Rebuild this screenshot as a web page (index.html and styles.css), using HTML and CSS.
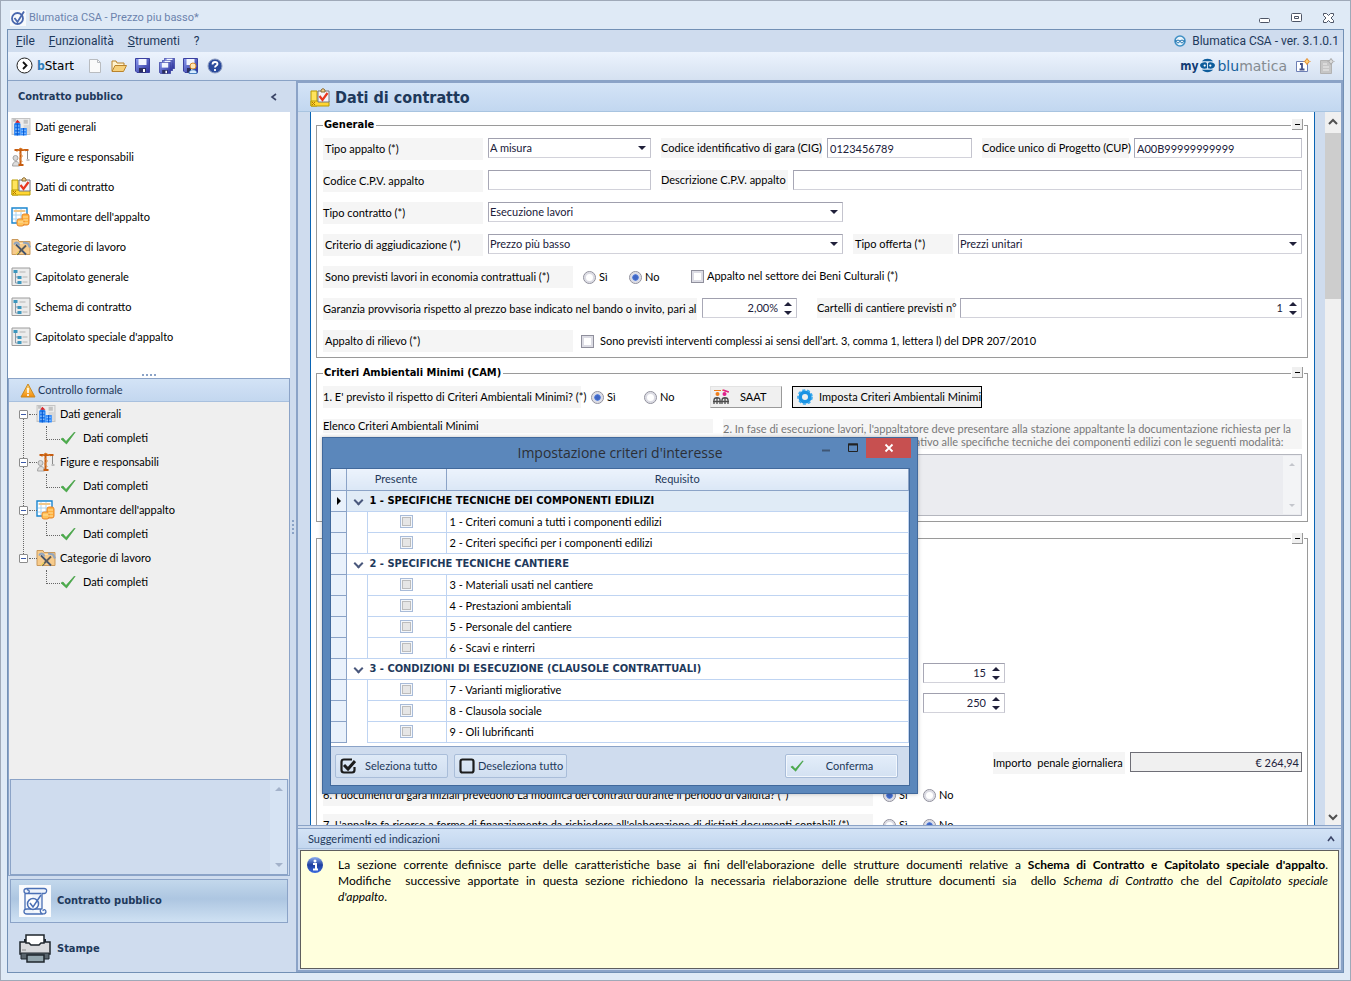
FILE: index.html
```html
<!DOCTYPE html>
<html lang="it">
<head>
    <meta charset="UTF-8">
    <meta name="viewport" content="width=device-width, initial-scale=1.0">
    <title>Blumatica CSA</title>
    <link rel="stylesheet" href="styles.css">
</head>
<body>
    <!-- Icons used more than once -->
    <svg class="defs" aria-hidden="true">
        <defs>
            <linearGradient id="gWarn" x1="0" y1="0" x2="0" y2="1"><stop offset="0" stop-color="#fddc7c"/><stop offset="1" stop-color="#f28c0a"/></linearGradient>
            <linearGradient id="gBlue" x1="0" y1="0" x2="0" y2="1"><stop offset="0" stop-color="#8fb0f0"/><stop offset="0.5" stop-color="#1f3f9f"/><stop offset="1" stop-color="#3a6ae0"/></linearGradient>
            <linearGradient id="gDisk" x1="0" y1="0" x2="1" y2="1"><stop offset="0" stop-color="#8c9cf0"/><stop offset="1" stop-color="#2a2f9a"/></linearGradient>
        </defs>
        <symbol id="i-building" viewBox="0 0 19 18">
            <path d="M1 1h17v15H1z" fill="#ececec" stroke="#c4c4c4"/><path d="M2 1h3v3H2zM12 2h4v4h-4z" fill="#c2c2c2"/><path d="M12 7h5v8h-5z" fill="#d8d8d8"/>
            <path d="M3 17V6l3-2 3 2v11z" fill="#1f7cf0"/><path d="M4 5l2-3 3 3z" fill="#dd2222"/><path d="M9 17v-7h6v7z" fill="#2f8cff"/>
            <path d="M4 8h4M4 11h4M4 14h4M10 12h4M10 15h4" stroke="#a9d2ff"/><path d="M6 6v11M12 10v7" stroke="#0b55c8"/>
        </symbol>
        <symbol id="i-crane" viewBox="0 0 19 20">
            <circle cx="4" cy="11" r="2.500" fill="#d8d8d8" stroke="#a4a4a4"/><path d="M1 19c0-6 7-6 7 0z" fill="#ddd" stroke="#a4a4a4"/>
            <path d="M3 3h14M9 1v17M7 18h5" stroke="#c65c10" stroke-width="2" fill="none"/><path d="M5 5l4-4 5 3M8 6l3 3-3 3 3 3" stroke="#e08a3c" fill="none"/><path d="M16 4v8M15 13h3" stroke="#8a8a8a" fill="none"/>
        </symbol>
        <symbol id="i-contract" viewBox="0 0 20 20">
            <path d="M1 3h6v15H1z" fill="#ffe45c" stroke="#b89a00"/><path d="M1 13h18v5H1z" fill="#ffd633" stroke="#b89a00"/><path d="M2 14l3 3M5 14l-3 3" stroke="#b07800"/>
            <path d="M8 3h11v11H8z" fill="#f4f4f8" stroke="#76767e"/><path d="M11 4V2l2-1.500 2 1.500v2z" fill="#eecb8a" stroke="#8c6d32"/><path d="M9.500 8l3 4 5-7" fill="none" stroke="#e8371f" stroke-width="2.200"/>
        </symbol>
        <symbol id="i-coins" viewBox="0 0 20 20">
            <path d="M1 1h15v15H1z" fill="#fff" stroke="#1a86d0" stroke-width="1.400"/><path d="M2 4h13M2 8h13M2 12h10" stroke="#a9d3f0"/><path d="M5 2v13M10 2v13" stroke="#a9d3f0"/><path d="M3 3h11v2H3z" fill="#f0c789"/>
            <rect x="11" y="7" width="7" height="11" rx="2" fill="#ffb13d" stroke="#e8862a"/><rect x="6" y="12" width="7" height="7" rx="2" fill="#ffc35a" stroke="#e8862a"/><path d="M12 10h5M12 13h5M12 16h5M7 15h5" stroke="#ffe0a0"/>
        </symbol>
        <symbol id="i-tools" viewBox="0 0 20 19">
            <path d="M1 2h6l1 2h11v13H1z" fill="#f7cb8b" stroke="#c9995c"/><path d="M2 6h16" stroke="#ffe2b5"/>
            <path d="M5 7l10 10" stroke="#44546c" stroke-width="1.800"/><path d="M15 8L6 17" stroke="#5b5b5b" stroke-width="1.800"/><path d="M8 14l-3 3" stroke="#eed25c" stroke-width="1.500"/>
            <path d="M3 7c2-3 5-2 5 1M12 5l5 1 2 4" fill="none" stroke="#93a6be" stroke-width="2.200"/>
        </symbol>
        <symbol id="i-outline" viewBox="0 0 19 20">
            <path d="M.5 1h18v17.500H.5z" fill="#ececec" stroke="#9c9c9c"/><path d="M4 5v11h3M4 10h3" fill="none" stroke="#8a9aa8"/>
            <path d="M2 3h4v3H2zM6 9h4v3H6zM6 14h4v3H6z" fill="#3c96bd"/><path d="M8 5h6M11 10h5M11 15h5" stroke="#b4b4b4"/>
        </symbol>
        <symbol id="i-check" viewBox="0 0 16 14"><path d="M1 8l2-1 3 3.500L14.500 1 15 1.500 6.500 13z" fill="#4bb04b" stroke="#3a963a" stroke-width=".6"/></symbol>
        <symbol id="i-face" viewBox="0 0 16 16">
            <path d="M2 3.500C5 0 11 0 14 3.500zM2 12.500c3 3.500 9 3.500 12 0z" fill="#0d5c9b"/><path d="M0 7.500C1 4 7 4 7.500 6v5C4 12 0 11 0 7.500zM16 7.500C15 4 9 4 8.500 6v5c3.500 1 7.500 0 7.500-3.500z" fill="#0d5c9b"/><circle cx="5" cy="8" r="1.200" fill="#fff"/><circle cx="11" cy="8" r="1.200" fill="#fff"/>
        </symbol>
        <symbol id="i-face-ring" viewBox="0 0 12 12">
            <circle cx="6" cy="6" r="5" fill="#e8f3fb" stroke="#3f8fc4" stroke-width="1.600"/><path d="M1 6h10" stroke="#2a79b2" stroke-width="1.500"/><circle cx="4" cy="6.500" r="1.400" fill="#fff" stroke="#2a79b2"/><circle cx="8" cy="6.500" r="1.400" fill="#fff" stroke="#2a79b2"/>
        </symbol>
        <symbol id="i-disk" viewBox="0 0 15 15">
            <path d="M.5.500h14v14H2l-1.500-1.500z" fill="url(#gDisk)" stroke="#3a40a0"/><path d="M3.500 1h8v6h-8z" fill="#f2f5ff"/><path d="M4 10h7v4.500H4z" fill="#2b2e60"/><path d="M8 11h2v3H8z" fill="#fff"/>
        </symbol>
    </svg>

    <div class="window">
        <header class="titlebar">
            <svg class="app-icon" viewBox="0 0 16 16"><path d="M0 0h16v16H0z" fill="#f8fafc"/><circle cx="7.500" cy="8.500" r="5.500" fill="none" stroke="#4a68ae" stroke-width="1.800"/><path d="M4.500 8l3 4L14 1.500" fill="none" stroke="#4a68ae" stroke-width="1.800"/></svg>
            <span>Blumatica CSA - Prezzo piu basso*</span>
            <div class="win-buttons">
                <button type="button" aria-label="Riduci"><svg width="14" height="12"><rect x="2.500" y="6.500" width="10" height="4" rx="1" fill="#fff" stroke="#4d5566"/></svg></button>
                <button type="button" aria-label="Ripristina"><svg width="14" height="12"><rect x="2.500" y="1.500" width="10" height="8" rx="1" fill="#fff" stroke="#4d5566"/><path d="M5.500 4.500h4v2h-4z" fill="none" stroke="#4d5566"/></svg></button>
                <button type="button" aria-label="Chiudi"><svg width="14" height="12"><path d="M2.500 1.500h3l2 2 2-2h3v2L10 6l2.500 2.500v2h-3l-2-2-2 2h-3v-2L5 6 2.500 3.500z" fill="#fff" stroke="#4d5566"/></svg></button>
            </div>
        </header>

        <div class="frame">
            <nav class="menubar">
                <a href="#"><u>F</u>ile</a>
                <a href="#"><u>F</u>unzionalità</a>
                <a href="#"><u>S</u>trumenti</a>
                <a href="#">?</a>
                <span class="version"><svg width="12" height="12"><use href="#i-face-ring"/></svg>Blumatica CSA - ver. 3.1.0.1</span>
            </nav>

            <div class="toolbar">
                <button type="button" class="bstart"><svg width="17" height="17"><circle cx="8.500" cy="8.500" r="7.500" fill="#fff" stroke="#222"/><path d="M7 5l3.500 3.500L7 12" fill="none" stroke="#111" stroke-width="1.800"/></svg><span><b>b</b>Start</span></button>
                <button type="button" aria-label="Nuovo"><svg width="16" height="16"><path d="M2.500 1.500h8l3 3v10h-11z" fill="#fafafa" stroke="#b9bcc0"/><path d="M10.500 1.500v3h3" fill="none" stroke="#b9bcc0"/></svg></button>
                <button type="button" aria-label="Apri"><svg width="16" height="16"><path d="M1 13V3h4l1 2h7v3" fill="#fff3cf" stroke="#b9832c"/><path d="M1 13.500l3-6h11.500l-3 6z" fill="#f6d07a" stroke="#b9832c"/></svg></button>
                <button type="button" aria-label="Salva"><svg width="16" height="16"><use href="#i-disk" width="15" height="15"/></svg></button>
                <button type="button" aria-label="Salva tutto"><svg width="16" height="16"><use href="#i-disk" x="5" y="0" width="11" height="11"/><use href="#i-disk" x="3" y="2" width="11" height="11"/><use href="#i-disk" x="0" y="4" width="12" height="12"/></svg></button>
                <button type="button" aria-label="Salva con nome"><svg width="16" height="16"><use href="#i-disk" width="15" height="15"/><circle cx="10" cy="8" r="3" fill="#ffe6b5" stroke="#d98a2a"/><path d="M6 15.500c0-5 8-5 8 0z" fill="#d8ecff" stroke="#4a80c0"/></svg></button>
                <button type="button" aria-label="Guida"><svg width="16" height="16"><circle cx="8" cy="8" r="7" fill="#2a4a9c" stroke="#8d9cc0"/><path d="M5.500 6.500c0-3.500 5-3 5-.5 0 1.500-2.500 1.500-2.500 3.500M8 11v2" fill="none" stroke="#fff" stroke-width="1.800"/></svg></button>
                <div class="brand">
                    <b>my</b><svg width="15" height="17"><use href="#i-face"/></svg><span><i>blu</i>matica</span>
                    <svg width="16" height="16"><path d="M1.500 3.500h11v10h-11z" fill="#fff" stroke="#6d7fb5"/><path d="M5 6h2v5M4.500 11.500h5" fill="none" stroke="#44538a" stroke-width="1.800"/><circle cx="12" cy="3.500" r="2" fill="#ffd27a" stroke="#e8902e"/><path d="M12 0v1M12 6v1M8.500 3.500h1M14.500 3.500h1" stroke="#e8902e"/></svg>
                    <svg width="16" height="16"><path d="M1.500 2.500h11v13h-11z" fill="#c6c6c6" stroke="#b2b2b2"/><path d="M4 6h4M4 9h6M4 12h6" stroke="#eee"/><circle cx="12" cy="3.500" r="2" fill="#ddd" stroke="#aaa"/><path d="M12 0v1M12 6v1M8.500 3.500h1M14.500 3.500h1" stroke="#aaa"/></svg>
                </div>
            </div>

            <div class="body">
                <aside class="sidebar">
                    <div class="side-col">
                        <div class="side-head"><b>Contratto pubblico</b><svg width="8" height="8"><path d="M6 1L2 4l4 3" fill="none" stroke="#3a4466" stroke-width="1.600"/></svg></div>
                        <ul class="side-list">
                            <li><a href="#"><svg><use href="#i-building"/></svg>Dati generali</a></li>
                            <li><a href="#"><svg><use href="#i-crane"/></svg>Figure e responsabili</a></li>
                            <li><a href="#"><svg><use href="#i-contract"/></svg>Dati di contratto</a></li>
                            <li><a href="#"><svg><use href="#i-coins"/></svg>Ammontare dell'appalto</a></li>
                            <li><a href="#"><svg><use href="#i-tools"/></svg>Categorie di lavoro</a></li>
                            <li><a href="#"><svg><use href="#i-outline"/></svg>Capitolato generale</a></li>
                            <li><a href="#"><svg><use href="#i-outline"/></svg>Schema di contratto</a></li>
                            <li><a href="#"><svg><use href="#i-outline"/></svg>Capitolato speciale d'appalto</a></li>
                        </ul>
                        <div class="grip"><i></i><i></i><i></i><i></i></div>

                        <section class="check-panel">
                            <div class="check-head"><svg width="16" height="15"><path d="M8 1l7 13H1z" fill="url(#gWarn)" stroke="#c98720" stroke-linejoin="round"/><path d="M8 5v5M8 11v2" stroke="#fff" stroke-width="1.600"/></svg>Controllo formale</div>
                            <ul class="tree">
                                <li><div class="node"><button type="button" aria-label="Comprimi"></button><svg><use href="#i-building"/></svg>Dati generali</div>
                                    <div class="leaf"><svg><use href="#i-check"/></svg>Dati completi</div></li>
                                <li><div class="node"><button type="button" aria-label="Comprimi"></button><svg><use href="#i-crane"/></svg>Figure e responsabili</div>
                                    <div class="leaf"><svg><use href="#i-check"/></svg>Dati completi</div></li>
                                <li><div class="node"><button type="button" aria-label="Comprimi"></button><svg><use href="#i-coins"/></svg>Ammontare dell'appalto</div>
                                    <div class="leaf"><svg><use href="#i-check"/></svg>Dati completi</div></li>
                                <li><div class="node"><button type="button" aria-label="Comprimi"></button><svg><use href="#i-tools"/></svg>Categorie di lavoro</div>
                                    <div class="leaf"><svg><use href="#i-check"/></svg>Dati completi</div></li>
                            </ul>
                            <div class="message-box"><div class="mini-scroll"><i class="up"></i><i class="down"></i></div></div>
                        </section>

                        <button type="button" class="nav-item active"><svg width="32" height="32"><path d="M0 0h32v32H0z" fill="#fafbfd"/><path d="M8 3.500h17c4 0 3 5 0 5h-2v16M8 3.500c-4 0-4 5 0 5 3 0 3-4 0-3.500M9 8.500h13M6 8v16M8 24h14c-3 4 4 7 5 3 0-3-3-3-3-1M8 24c-4 0-4 5 0 5h16" fill="#eef3fb" stroke="#4a6fb5" stroke-width="1.300"/><circle cx="14" cy="19" r="5.500" fill="#fff" stroke="#4a6fb5" stroke-width="1.500"/><path d="M11 18l3 4 8-12" fill="none" stroke="#4a6fb5" stroke-width="1.500"/></svg>Contratto pubblico</button>
                        <button type="button" class="nav-item"><svg width="32" height="32"><path d="M5 6h22v5H5z" fill="#1f262c"/><path d="M1 9h30v12H1z" fill="#d9dadd" stroke="#1f262c" stroke-width="1.500"/><path d="M2 20h28v6H2z" fill="#59646c" stroke="#1f262c"/><path d="M7 2h18v8l-3 0-2 2h-8l-2-2H7z" fill="#fff" stroke="#1f262c" stroke-width="1.500"/><path d="M8 22h17v7H8z" fill="#93a5ad" stroke="#1f262c" stroke-width="1.500"/><path d="M3 17h4" stroke="#8c8c8c"/></svg>Stampe</button>
                    </div>
                    <div class="grip vertical"><i></i><i></i><i></i><i></i></div>
                </aside>

                <main class="main">
                    <div class="main-head"><svg width="20" height="20"><use href="#i-contract"/></svg><h1>Dati di contratto</h1></div>

                    <div class="scroll-area">
                        <form class="form">
                            <fieldset>
                                <legend>Generale</legend>
                                <button type="button" class="collapse" aria-label="Comprimi Generale"></button>
                                <div class="row">
                                    <label class="lbl first indent w160" for="tipoAppalto">Tipo appalto (*)</label>
                                    <span class="select w163"><select id="tipoAppalto"><option>A misura</option></select></span>
                                    <label class="lbl w161" for="cig">Codice identificativo di gara (CIG)</label>
                                    <input type="text" class="w145" id="cig" value="0123456789">
                                    <label class="lbl w147" for="cup">Codice unico di Progetto (CUP)</label>
                                    <input type="text" class="grow" id="cup" value="A00B99999999999">
                                </div>
                                <div class="row">
                                    <label class="lbl first w160" for="cpv">Codice C.P.V. appalto</label>
                                    <input type="text" class="w163" id="cpv">
                                    <label class="lbl w127" for="cpvDescr">Descrizione C.P.V. appalto</label>
                                    <input type="text" class="grow" id="cpvDescr">
                                </div>
                                <div class="row">
                                    <label class="lbl first w160" for="tipoContratto">Tipo contratto (*)</label>
                                    <span class="select w355"><select id="tipoContratto"><option>Esecuzione lavori</option></select></span>
                                </div>
                                <div class="row">
                                    <label class="lbl first indent w160" for="criterio">Criterio di aggiudicazione (*)</label>
                                    <span class="select w355"><select id="criterio"><option>Prezzo più basso</option></select></span>
                                    <label class="lbl indent w100" for="offerta">Tipo offerta (*)</label>
                                    <span class="select grow"><select id="offerta"><option>Prezzi unitari</option></select></span>
                                </div>
                                <div class="row">
                                    <span class="lbl first indent w250">Sono previsti lavori in economia contrattuali (*)</span>
                                    <div class="radios">
                                        <label><input type="radio" name="economia">Sì</label>
                                        <label><input type="radio" name="economia" checked>No</label>
                                    </div>
                                    <label class="check"><input type="checkbox">Appalto nel settore dei Beni Culturali (*)</label>
                                </div>
                                <div class="row">
                                    <label class="lbl first w374" for="garanzia">Garanzia provvisoria rispetto al prezzo base indicato nel bando o invito, pari al</label>
                                    <span class="spin w95"><input type="text" id="garanzia" value="2,00%"><i class="up"></i><i class="down"></i></span>
                                    <label class="lbl cartelli" for="cartelli">Cartelli di cantiere previsti n°</label>
                                    <span class="spin grow"><input type="text" id="cartelli" value="1"><i class="up"></i><i class="down"></i></span>
                                </div>
                                <div class="row">
                                    <span class="lbl first indent w250">Appalto di rilievo (*)</span>
                                    <label class="check wide"><input type="checkbox">Sono previsti interventi complessi ai sensi dell’art. 3, comma 1, lettera l) del DPR 207/2010</label>
                                </div>
                            </fieldset>

                            <fieldset>
                                <legend>Criteri Ambientali Minimi (CAM)</legend>
                                <button type="button" class="collapse" aria-label="Comprimi CAM"></button>
                                <div class="row">
                                    <span class="lbl first w258">1. E' previsto il rispetto di Criteri Ambientali Minimi? (*)</span>
                                    <div class="radios loose">
                                        <label><input type="radio" name="cam" checked>Sì</label>
                                        <label><input type="radio" name="cam">No</label>
                                    </div>
                                    <button type="button" class="tool-btn saat"><svg width="16" height="16"><path d="M1 1.500h7M9 1l6 2" stroke="#ef7d1a"/><path d="M10 1l6 2" stroke="#e0218a" stroke-width="1.500"/><circle cx="4.500" cy="5" r="2" fill="#ef7d1a"/><circle cx="11.500" cy="5" r="2" fill="#e0218a"/><path d="M1 15v-4c0-3 6-3 6 0v4M9 15v-4c0-3 6-3 6 0v4M0 12.500h16M4 9v6M12 9v6" fill="none" stroke="#4c4c4c" stroke-width="1.300"/></svg>SAAT</button>
                                    <button type="button" class="tool-btn imposta"><svg width="16" height="16"><circle cx="8" cy="8" r="4.800" fill="none" stroke="#1c93e3" stroke-width="3.600"/><circle cx="8" cy="8" r="7" fill="none" stroke="#38a9ef" stroke-width="1.600" stroke-dasharray="3 2"/></svg>Imposta Criteri Ambientali Minimi</button>
                                </div>
                                <div class="cam-cols">
                                    <div class="cam-list"><span class="lbl first">Elenco Criteri Ambientali Minimi</span></div>
                                    <div class="cam-docs">
                                        <label class="note" for="modalita">2. In fase di esecuzione lavori, l'appaltatore deve presentare alla stazione appaltante la documentazione richiesta per la<br>verifica di conformità, con il progetto relativo alle specifiche tecniche dei componenti edilizi con le seguenti modalità:</label>
                                        <div class="area"><textarea id="modalita" disabled></textarea><div class="mini-scroll"><i class="up"></i><i class="down"></i></div></div>
                                    </div>
                                </div>
                            </fieldset>

                            <fieldset class="penali">
                                <button type="button" class="collapse" aria-label="Comprimi"></button>
                                <div class="row tight right-part"><span class="spin w82"><input type="text" aria-label="Giorni" value="15"><i class="up"></i><i class="down"></i></span></div>
                                <div class="row right-part"><span class="spin w82"><input type="text" aria-label="Limite" value="250"><i class="up"></i><i class="down"></i></span></div>
                                <div class="row amount">
                                    <label class="lbl first w130" for="penale">Importo &nbsp;penale giornaliera</label>
                                    <input type="text" class="readonly" id="penale" value="€ 264,94" readonly>
                                </div>
                                <div class="row tight">
                                    <span class="lbl first w550">6. I documenti di gara iniziali prevedono La modifica dei contratti durante il periodo di validità? (*)</span>
                                    <div class="radios close">
                                        <label><input type="radio" name="modifica" checked>Sì</label>
                                        <label><input type="radio" name="modifica">No</label>
                                    </div>
                                </div>
                                <div class="row tight">
                                    <span class="lbl first w550">7. L'appalto fa ricorso a forme di finanziamento da richiedere all'elaborazione di distinti documenti contabili (*)</span>
                                    <div class="radios close">
                                        <label><input type="radio" name="finanziamento">Sì</label>
                                        <label><input type="radio" name="finanziamento" checked>No</label>
                                    </div>
                                </div>
                            </fieldset>
                        </form>
                        <div class="scrollbar">
                            <svg width="16" height="21"><path d="M4 12l4-4 4 4" fill="none" stroke="#505050" stroke-width="2"/></svg>
                            <div class="thumb"></div>
                            <svg width="16" height="16"><path d="M4 6l4 4 4-4" fill="none" stroke="#505050" stroke-width="2"/></svg>
                        </div>
                    </div>

                    <section class="hints">
                        <div class="hints-head">Suggerimenti ed indicazioni<svg width="8" height="8"><path d="M1 6l3-4 3 4" fill="none" stroke="#3a4466" stroke-width="1.600"/></svg></div>
                        <div class="hints-body">
                            <svg width="18" height="18"><circle cx="9" cy="9" r="8" fill="url(#gBlue)"/><circle cx="9" cy="5" r="1.500" fill="#fff"/><path d="M7 8h3v5M7 13.500h5" fill="none" stroke="#fff" stroke-width="2"/></svg>
                            <div class="hints-text">
                                <p>La sezione corrente definisce parte delle caratteristiche base ai fini dell'elaborazione delle strutture documenti relative a <b>Schema di Contratto e Capitolato speciale d'appalto</b>.</p>
                                <p>Modifiche &nbsp;successive apportate in questa sezione richiedono la necessaria rielaborazione delle strutture documenti sia &nbsp;dello <em>Schema di Contratto</em> che del <em>Capitolato speciale</em></p>
                                <p class="last"><em>d'appalto</em>.</p>
                            </div>
                        </div>
                    </section>
                </main>
            </div>
        </div>

        <!-- Criteria dialog -->
        <div class="dialog" role="dialog" aria-labelledby="dialogTitle">
            <div class="dialog-head">
                <h2 id="dialogTitle">Impostazione criteri d'interesse</h2>
                <div class="dialog-buttons">
                    <button type="button" aria-label="Riduci"><svg width="10" height="10"><path d="M1 7.500h8" stroke="#3f5675" stroke-width="2"/></svg></button>
                    <button type="button" aria-label="Ingrandisci"><svg width="10" height="10"><path d="M.5 1h9v7.500h-9z" fill="none" stroke="#222"/><path d="M0 1.500h10" stroke="#222" stroke-width="2"/></svg></button>
                    <button type="button" class="close" aria-label="Chiudi"><svg width="10" height="10"><path d="M1.500 1.500l7 7M8.500 1.500l-7 7" stroke="#fff" stroke-width="1.800"/></svg></button>
                </div>
            </div>
            <div class="dialog-body">
                <table class="grid">
                    <colgroup><col class="c-mark"><col class="c-tree"><col class="c-check"><col></colgroup>
                    <thead><tr><th></th><th colspan="2">Presente</th><th>Requisito</th></tr></thead>
                    <tbody>
                        <tr class="group current"><td class="mark"></td><td colspan="3">1 - SPECIFICHE TECNICHE DEI COMPONENTI EDILIZI</td></tr>
                        <tr><td class="mark"></td><td></td><td><input type="checkbox" id="r1"></td><td><label for="r1">1 - Criteri comuni a tutti i componenti edilizi</label></td></tr>
                        <tr><td class="mark"></td><td></td><td><input type="checkbox" id="r2"></td><td><label for="r2">2 - Criteri specifici per i componenti edilizi</label></td></tr>
                        <tr class="group"><td class="mark"></td><td colspan="3">2 - SPECIFICHE TECNICHE CANTIERE</td></tr>
                        <tr><td class="mark"></td><td></td><td><input type="checkbox" id="r3"></td><td><label for="r3">3 - Materiali usati nel cantiere</label></td></tr>
                        <tr><td class="mark"></td><td></td><td><input type="checkbox" id="r4"></td><td><label for="r4">4 - Prestazioni ambientali</label></td></tr>
                        <tr><td class="mark"></td><td></td><td><input type="checkbox" id="r5"></td><td><label for="r5">5 - Personale del cantiere</label></td></tr>
                        <tr><td class="mark"></td><td></td><td><input type="checkbox" id="r6"></td><td><label for="r6">6 - Scavi e rinterri</label></td></tr>
                        <tr class="group"><td class="mark"></td><td colspan="3">3 - CONDIZIONI DI ESECUZIONE (CLAUSOLE CONTRATTUALI)</td></tr>
                        <tr><td class="mark"></td><td></td><td><input type="checkbox" id="r7"></td><td><label for="r7">7 - Varianti migliorative</label></td></tr>
                        <tr><td class="mark"></td><td></td><td><input type="checkbox" id="r8"></td><td><label for="r8">8 - Clausola sociale</label></td></tr>
                        <tr><td class="mark"></td><td></td><td><input type="checkbox" id="r9"></td><td><label for="r9">9 - Oli lubrificanti</label></td></tr>
                    </tbody>
                </table>
                <div class="dialog-foot">
                    <button type="button"><svg width="16" height="16"><path d="M12 1.500H4Q1.500 1.500 1.500 4v8q0 2.500 2.500 2.500h8q2.500 0 2.500-2.500V9" fill="none" stroke="#1c1c1c" stroke-width="2.200"/><path d="M4 7l4 4 7-8" fill="none" stroke="#1c1c1c" stroke-width="3"/></svg><span>Seleziona tutto</span></button>
                    <button type="button" class="snug"><svg width="16" height="16"><rect x="1.500" y="1.500" width="13" height="13" rx="2" fill="none" stroke="#1c1c1c" stroke-width="2.200"/></svg><span>Deseleziona tutto</span></button>
                    <button type="button" class="confirm"><svg width="14" height="14"><use href="#i-check"/></svg><span>Conferma</span></button>
                </div>
            </div>
        </div>
    </div>
</body>
</html>
```
FILE: styles.css
```css
* {
    box-sizing: border-box;
}

body {
    margin: 0;
    font-family: Lato, "Liberation Sans", sans-serif;
    font-size: 11px;
    line-height: 14px;
    color: #000;
}

button, input, select, textarea {
    font: inherit;
    color: inherit;
    margin: 0;
}

button {
    padding: 0;
    border: none;
    background: none;
}

svg {
    flex: none;
    display: block;
}

a {
    color: inherit;
    text-decoration: none;
}

ul {
    margin: 0;
    padding: 0;
    list-style: none;
}

b, h1, legend {
    font-family: "DejaVu Sans Condensed", "DejaVu Sans", sans-serif;
    font-weight: bold;
}

.defs {
    position: absolute;
    width: 0;
    height: 0;
}

/* Window frame */
.window {
    position: relative;
    display: flex;
    flex-direction: column;
    height: 100vh;
    padding: 0 6px 7px;
    border: 1px solid #9fa9b8;
    background: #dfeaf6;
}

.titlebar {
    display: flex;
    align-items: center;
    gap: 3px;
    height: 28px;
    padding: 5px 0 0 3px;
    color: #6c83ad;
    font-family: Roboto, sans-serif;
}

.app-icon {
    width: 16px;
    height: 16px;
}

.win-buttons {
    display: flex;
    margin-left: auto;
}

.win-buttons button {
    width: 32px;
    display: flex;
    justify-content: center;
}

.frame {
    flex: 1;
    min-height: 0;
    display: flex;
    flex-direction: column;
    border: 1px solid #7290b5;
    background: #cfdcee;
}

.menubar {
    display: flex;
    align-items: center;
    gap: 14px;
    height: 22px;
    padding: 0 4px 0 8px;
    font-family: Roboto, sans-serif;
    font-size: 12px;
    color: #1e395b;
}

.version {
    display: flex;
    align-items: center;
    gap: 6px;
    margin-left: auto;
}

.toolbar {
    display: flex;
    align-items: center;
    gap: 8px;
    height: 29px;
    padding: 0 8px 1px 8px;
    background: linear-gradient(#ecf3fd, #d5e1f1);
    border-bottom: 1px solid #8aa3c6;
}

.bstart {
    display: flex;
    align-items: center;
    gap: 4px;
    margin-right: 5px;
    font: 12px/14px "DejaVu Sans", sans-serif;
}

.bstart b {
    color: #2f7db8;
}

.brand {
    display: flex;
    align-items: center;
    gap: 2px;
    margin-left: auto;
}

.brand b {
    color: #123c74;
    font-size: 12px;
}

.brand span {
    font: 14px/16px "DejaVu Sans", sans-serif;
    color: #858b91;
}

.brand i {
    font-style: normal;
    color: #17619c;
}

.brand svg:nth-of-type(n+2) {
    margin-left: 6px;
}

.body {
    flex: 1;
    min-height: 0;
    display: flex;
}

/* Sidebar */
.sidebar {
    flex: none;
    width: 288px;
    display: flex;
    background: #cfdcee;
}

.side-col {
    width: 282px;
    display: flex;
    flex-direction: column;
}

.side-head {
    display: flex;
    justify-content: space-between;
    align-items: center;
    height: 31px;
    padding: 1px 12px 0 10px;
    color: #1e395b;
}

.side-list {
    height: 262px;
    background: #fff;
}

.side-list a {
    display: flex;
    align-items: center;
    gap: 4px;
    height: 30px;
    padding-left: 3px;
}

.side-list svg, .node svg {
    width: 20px;
    height: 20px;
}

.grip {
    display: flex;
    justify-content: center;
    gap: 2px;
    height: 4px;
    background: #fff;
}

.grip i {
    width: 2px;
    height: 2px;
    background: #8ba3c7;
}

.grip.vertical {
    flex-direction: column;
    align-items: center;
    flex: 1;
    height: auto;
    background: none;
}

.check-panel {
    flex: 1;
    min-height: 0;
    display: flex;
    flex-direction: column;
    border: 1px solid #8ba3c7;
}

.check-head {
    display: flex;
    align-items: center;
    gap: 2px;
    height: 23px;
    padding-left: 11px;
    background: linear-gradient(#d3e3f6, #c3d7ef);
    border-bottom: 1px solid #a8c0de;
    color: #1e395b;
}

.tree {
    flex: 1;
    padding-left: 10px;
    background: #efefef;
}

.tree li {
    position: relative;
}

.node, .leaf {
    position: relative;
    display: flex;
    align-items: center;
    height: 24px;
}

.node svg {
    margin: 0 4px 0 8px;
}

.node button {
    position: relative;
    width: 9px;
    height: 9px;
    border: 1px solid #8c8c8c;
    border-radius: 1px;
    background: #fff;
    z-index: 1;
}

.node button::after {
    content: "";
    position: absolute;
    left: 1px;
    right: 1px;
    top: 3px;
    border-top: 1px solid #3c5aa8;
}

.leaf {
    gap: 7px;
    padding-left: 41px;
}

.leaf svg {
    width: 16px;
    height: 14px;
}

/* Dotted tree lines */
.node::before {
    content: "";
    position: absolute;
    left: 10px;
    top: 12px;
    width: 8px;
    border-top: 1px dotted #666;
}

.tree li:not(:last-child)::before {
    content: "";
    position: absolute;
    left: 4px;
    top: 12px;
    height: 48px;
    border-left: 1px dotted #666;
}

.leaf::before {
    content: "";
    position: absolute;
    left: 27px;
    top: 0;
    width: 13px;
    height: 13px;
    border-left: 1px dotted #666;
    border-bottom: 1px dotted #666;
}

.message-box {
    display: flex;
    justify-content: flex-end;
    height: 96px;
    margin: 0 1px;
    border: 1px solid #8ba3c7;
    background: #cfdcee;
}

.mini-scroll {
    display: flex;
    flex-direction: column;
    justify-content: space-between;
    align-items: center;
    width: 17px;
    padding: 7px 0;
    background: #d6e3f3;
}

.up, .down {
    border: 4px solid transparent;
}

.up {
    border-top: none;
    border-bottom-color: #a3b2ca;
}

.down {
    border-bottom: none;
    border-top-color: #a3b2ca;
}

.nav-item {
    display: flex;
    align-items: center;
    gap: 6px;
    height: 47px;
    padding-left: 11px;
    font: bold 11px/14px "DejaVu Sans Condensed", "DejaVu Sans", sans-serif;
    color: #1e395b;
}

.nav-item.active {
    height: 44px;
    margin: 3px 2px 2px;
    padding-left: 8px;
    border: 1px solid #8ba3c7;
    background: linear-gradient(#c3d8ec, #adc6e1 45%, #cfe1f3);
}

/* Main area */
.main {
    flex: 1;
    min-width: 0;
    display: flex;
    flex-direction: column;
    border: 2px solid #8ba3c7;
}

.main-head {
    display: flex;
    align-items: center;
    gap: 5px;
    height: 29px;
    flex: none;
    padding: 2px 0 0 12px;
    background: linear-gradient(#d4e4f7, #c2d7f0);
    border-bottom: 1px solid #a8c4e0;
}

.main-head h1 {
    margin: 0;
    font-size: 16px;
    line-height: 20px;
    color: #1e395b;
}

.scroll-area {
    flex: 1;
    min-height: 0;
    display: flex;
    padding-left: 12px;
    overflow: hidden;
    background: #cfdcee;
}

.form {
    flex: 1;
    min-width: 0;
    padding: 5px 6px 0 5px;
    border: solid #0a64b4;
    border-width: 0 1px;
    background: #fff;
}

.scrollbar {
    display: flex;
    flex-direction: column;
    width: 16px;
    margin-left: 10px;
    background: #f0f0f0;
}

.thumb {
    height: 166px;
    margin-bottom: auto;
    background: #cdcdcd;
}

fieldset {
    position: relative;
    min-width: 0;
    margin: 0 0 7px;
    padding: 5px 5px 7px 6px;
    border: 1px solid #9a9a9a;
}

legend {
    padding: 0 2px 0 1px;
    line-height: 16px;
}

.collapse {
    position: absolute;
    right: 4px;
    top: -6px;
    width: 11px;
    height: 11px;
    border: 1px solid #9a9a9a;
    border-width: 0 1px 1px 0;
    background: #f0f0f0;
    box-shadow: 0 0 0 1px #fff;
}

.collapse::after {
    content: "";
    position: absolute;
    left: 3px;
    right: 2px;
    top: 5px;
    border-top: 1px solid #000;
}

legend + .collapse {
    top: -14px;
}

.row {
    display: flex;
    height: 20px;
    margin-bottom: 12px;
}

.row:last-child {
    margin-bottom: 0;
}

.row.tight {
    margin-bottom: 10px;
}

.lbl {
    flex: none;
    height: 20px;
    margin: 0 5px 0 10px;
    line-height: 20px;
    white-space: nowrap;
    background: #f5f5f5;
}

.lbl.first {
    height: 22px;
    margin-left: 0;
    line-height: 22px;
}

.lbl.indent {
    padding-left: 2px;
}

.row > input, .spin, .select {
    height: 20px;
    border: 1px solid;
    border-color: #a0a0ae #c4c4ce #d2d2da #a8a8b6;
    background: #fff;
    color: #20203a;
}

.row > input {
    padding: 0 2px;
}

.select, .spin {
    position: relative;
    display: flex;
}

.select select, .spin input {
    width: 100%;
    min-width: 0;
    padding: 0 2px;
    border: none;
    background: none;
    appearance: none;
}

.select select {
    padding: 0 1px;
}

.select::after {
    content: "";
    position: absolute;
    right: 4px;
    top: 7px;
    border: 4px solid transparent;
    border-top-color: #20203a;
    border-bottom: none;
    pointer-events: none;
}

.spin input {
    padding-right: 18px;
    text-align: right;
}

.spin i {
    position: absolute;
    right: 4px;
    top: 3px;
    border-bottom-color: #20203a;
}

.spin .down {
    top: 12px;
    border-top-color: #20203a;
    border-bottom: none;
}

.grow {
    flex: 1;
    min-width: 0;
}

.w82 { width: 82px; }
.w95 { width: 95px; }
.w100 { width: 100px; }
.w127 { width: 127px; }
.w130 { width: 132px; }
.w145 { width: 145px; }
.w147 { width: 147px; }
.w160 { width: 160px; }
.w161 { width: 161px; }
.w163 { width: 163px; }
.w250 { width: 250px; }
.w258 { width: 258px; }
.w355 { width: 355px; }
.w374 { width: 374px; }
.w550 { width: 550px; }

.cartelli {
    width: 138px;
    margin-left: 20px;
}

.radios, .radios label, .check {
    display: flex;
    align-items: center;
    white-space: nowrap;
}

.radios {
    height: 22px;
    margin-left: 5px;
}

.radios label, .check {
    gap: 3px;
    height: 22px;
}

.radios label {
    width: 46px;
}

.radios.loose label {
    width: 53px;
}

.radios.close label {
    width: 40px;
}

input[type="radio"], input[type="checkbox"] {
    appearance: none;
    flex: none;
    width: 13px;
    height: 13px;
    border: 1px solid #8f8f9c;
    background: #fff;
    box-shadow: inset 0 0 0 2px #dcdce4;
}

input[type="radio"] {
    border-radius: 50%;
}

input[type="radio"]:checked {
    background: radial-gradient(circle, #3f66c4 0 2px, #5f86dc 3px, #fff 4px);
}

.check {
    height: 20px;
    margin-left: 16px;
}

.check.wide {
    gap: 6px;
    height: 22px;
    margin-left: 3px;
}

.tool-btn {
    display: flex;
    align-items: center;
    height: 22px;
    padding: 0 4px;
    background: #f0f0f0;
    white-space: nowrap;
}

.saat {
    width: 72px;
    gap: 11px;
    margin: 0 10px 0 13px;
    padding: 0 2px;
    border: 1px solid #e3e3e3;
    border-right-color: #9a9a9a;
    border-bottom-color: #9a9a9a;
}

.imposta {
    width: 190px;
    gap: 6px;
    border: 1px solid #000;
}

.cam-cols {
    display: flex;
    gap: 10px;
    margin-top: 13px;
    margin-bottom: -2px;
}

.cam-list {
    flex: none;
    width: 390px;
}

.cam-list .lbl {
    display: block;
    height: 14px;
    margin: 0;
    line-height: 14px;
}

.cam-docs {
    flex: 1;
    min-width: 0;
}

.note {
    display: block;
    height: 30px;
    padding-top: 3px;
    line-height: 13px;
    white-space: nowrap;
    color: #787878;
    background: #f5f5f5;
}

.area {
    display: flex;
    height: 62px;
    margin-top: 5px;
    border: 1px solid #b4b6be;
    background: #ebecf0;
}

.area textarea {
    flex: 1;
    border: none;
    background: none;
    resize: none;
}

.area .mini-scroll {
    margin: 1px;
    background: #f3f4f6;
}

.area i {
    border-width: 3px;
}

.area .up {
    border-top: none;
    border-bottom-color: #c4c6cc;
}

.area .down {
    border-bottom: none;
    border-top-color: #c4c6cc;
}

.penali {
    margin-top: 16px;
    padding-top: 124px;
}

.right-part {
    padding-left: 600px;
}

.row.right-part:not(.tight) {
    margin-bottom: 39px;
}

.amount {
    justify-content: flex-end;
}

.row .readonly {
    width: 172px;
    border-color: #6e6e76;
    background: #f0f0f0;
    text-align: right;
}

/* Hints */
.hints {
    flex: none;
    border-top: 1px solid #8ba3c7;
    padding-top: 2px;
}

.hints-head {
    display: flex;
    justify-content: space-between;
    align-items: center;
    height: 21px;
    padding: 0 6px 0 10px;
    border: 1px solid #8ba3c7;
    border-width: 1px 0;
    border-bottom-color: #a8c0de;
    background: linear-gradient(#d3e3f6, #c3d7ef);
    color: #1e395b;
}

.hints-body {
    display: flex;
    gap: 14px;
    height: 119px;
    margin: 1px 2px;
    padding: 5px 10px 5px 5px;
    border: 1px solid #5e5e5e;
    background: #ffffdd;
}

.hints-text {
    flex: 1;
    padding-top: 1px;
    font: 12px/16px Lato, "Open Sans", sans-serif;
}

.hints-text p {
    margin: 0;
    text-align: justify;
    text-align-last: justify;
}

.hints-text .last {
    text-align-last: left;
}

.hints-text b {
    font-family: inherit;
}

/* Dialog */
.dialog {
    position: absolute;
    left: 321px;
    top: 436px;
    width: 596px;
    padding: 0 7px 7px;
    border: 1px solid #41699c;
    background: #5b87bb;
    box-shadow: 0 0 4px rgba(0, 0, 0, 0.25);
}

.dialog-head {
    position: relative;
    display: flex;
    justify-content: center;
    height: 30px;
}

.dialog-head h2 {
    margin: 0;
    font: 14px/30px "Open Sans", "Noto Sans", sans-serif;
    color: #2b2f36;
}

.dialog-buttons {
    position: absolute;
    right: -1px;
    top: 0;
    display: flex;
}

.dialog-buttons button {
    width: 27px;
    height: 20px;
    display: flex;
    justify-content: center;
    align-items: center;
}

.dialog-buttons .close {
    width: 45px;
    background: #c75050;
}

.dialog-body {
    border: 1px solid #41699c;
    background: #fff;
}

.grid {
    width: 100%;
    margin-bottom: 3px;
    border-collapse: collapse;
    table-layout: fixed;
}

.c-mark { width: 15px; }
.c-tree { width: 21px; }
.c-check { width: 79px; }

.grid th {
    height: 21px;
    padding: 0;
    border: 1px solid #8ba3c7;
    border-top: none;
    border-left: none;
    background: linear-gradient(#ecf3fc, #dbe7f6);
    font-weight: normal;
    color: #1e395b;
}

.grid td {
    height: 21px;
    padding: 0 0 0 3px;
    border: 1px solid #bfd4f2;
    line-height: 14px;
}

.grid td:nth-child(2) {
    border-top: none;
    border-bottom: none;
}

.grid td:nth-child(3) {
    padding: 0;
    text-align: center;
}

.grid .mark {
    position: relative;
    border: 1px solid #8ba3c7;
    border-left: none;
    background: #e9f1fb;
}

.grid input {
    display: block;
    margin: 0 auto;
    border-color: #a8bbd8;
    background: #e6e6e6;
    box-shadow: inset 0 0 0 1px #f4f7fb, inset 0 0 0 2px #bcbcbc;
}

.grid .group td:nth-child(2) {
    position: relative;
    padding-left: 23px;
    border-top: 1px solid #bfd4f2;
    border-bottom: 1px solid #bfd4f2;
    font: bold 11px/14px "DejaVu Sans Condensed", "DejaVu Sans", sans-serif;
    color: #1e395b;
}

.group td:nth-child(2)::before {
    content: "";
    position: absolute;
    left: 8px;
    top: 6px;
    width: 5px;
    height: 5px;
    border: solid #4a587c;
    border-width: 0 2px 2px 0;
    transform: rotate(45deg);
}

.grid .current td:nth-child(2) {
    background: #e0ebf6;
    color: #000;
}

.current .mark::after {
    content: "";
    position: absolute;
    left: 6px;
    top: 6px;
    border: 4px solid transparent;
    border-left-color: #000;
    border-right: none;
}

.dialog-foot {
    display: flex;
    gap: 6px;
    height: 39px;
    padding: 7px 11px 0 4px;
    border-top: 1px solid #8ba3c7;
    background: #cfdcee;
}

.dialog-foot button {
    display: flex;
    align-items: center;
    gap: 9px;
    width: 113px;
    height: 24px;
    padding: 0 4px;
    border: 1px solid #a9bdd9;
    border-radius: 2px;
    background: linear-gradient(#dfeaf7, #d0def0);
    color: #1e395b;
    white-space: nowrap;
}

.dialog-foot .snug {
    gap: 3px;
}

.dialog-foot .confirm {
    gap: 2px;
    margin-left: auto;
    background: linear-gradient(#e4eefa, #d3e1f2);
    box-shadow: inset 0 0 0 1px #f2f7fd;
}

.confirm span {
    flex: 1;
    text-align: center;
}
```
